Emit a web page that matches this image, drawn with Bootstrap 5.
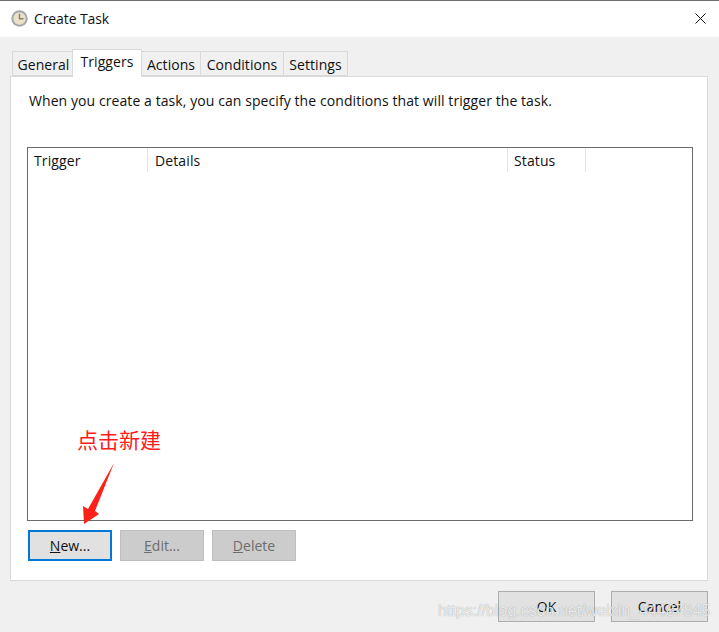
<!DOCTYPE html>
<html lang="en">
<head>
<meta charset="utf-8">
<title>Create Task</title>
<link href="https://cdn.jsdelivr.net/npm/bootstrap@5.3.0/dist/css/bootstrap.min.css" rel="stylesheet">
<style>
html,body{margin:0;height:632px;overflow:hidden}
body{background:#f0f0f0;font-family:"Open Sans","Noto Sans",sans-serif;font-size:14px;color:#111;position:relative}
.dlg-title{height:37px;background:#fff;border-top:1px solid #6e6e6e;padding:0 13px 2px 11px}
.dlg-title-text{font-size:14px;margin-left:6px;letter-spacing:-.1px}
.dlg-body{padding:13px 11px 0 10px}
.dlg-tabs{padding-left:2px;height:27px;border:0;flex-wrap:nowrap;align-items:flex-end;position:relative;z-index:1}
.dlg-tab{height:25px;border:1px solid #d9d9d9;border-left-width:0;background:#f0f0f0;line-height:25px;letter-spacing:.05px;color:#111;white-space:nowrap;margin-bottom:1px;text-align:center}
.dlg-tab:first-child{border-left-width:1px;padding-left:2px}
.dlg-tab.on{height:28px;background:#fff;border-left-width:1px;border-bottom:0;margin:0 0 0 -1px;line-height:24px}
.dlg-panel{height:505px;margin-top:-1px;background:#fff;border:1px solid #d9d9d9;padding:14px 14px 0 16px}
.dlg-intro{margin:0;height:56px;line-height:19px;letter-spacing:.08px;padding-left:2px}
.dlg-list{height:374px;border:1px solid #6a6a6a;background:#fff}
.dlg-col{height:24px;border-right:1px solid #e5e5e5;padding:1px 0 0 6px;line-height:24px;letter-spacing:.12px}
.w1{width:120px}.w2{width:360px;padding-left:7px}.w3{width:78px}
.dlg-btns{margin:9px 0 0 1px;gap:8px}
.dlg-btn{width:84px;height:31px;border:1px solid #adadad;border-radius:0;background:#e1e1e1;color:#111;font-size:14px;padding:0;line-height:27px}
.dlg-btn.focus-blue{border:2px solid #0078d7}
.dlg-btn:disabled{background:#cccccc;border-color:#bfbfbf;color:#6d6d6d;opacity:1}
.dlg-foot{justify-content:flex-end;gap:16px;margin-top:10px}
.dlg-foot .dlg-btn{width:97px}
.note{position:absolute;left:77px;top:426px;color:#ff1a1a;font-family:"Noto Sans CJK SC",sans-serif;font-size:21px;line-height:26px}
.note-arrow{position:absolute;left:78px;top:460px}
.wm{position:absolute;left:438px;top:601px;font-family:"Liberation Sans",sans-serif;font-size:16px;color:rgba(255,255,255,.78);text-shadow:0 0 1px rgba(110,110,110,.7);white-space:nowrap;line-height:20px}
</style>
</head>
<body>
<div class="dlg-title d-flex align-items-center">
  <svg width="17" height="17" viewBox="0 0 17 17">
    <circle cx="8.5" cy="8.5" r="8.2" fill="#a3a7a9"/>
    <circle cx="8.5" cy="8.5" r="6.2" fill="#e9e0c8"/>
    <path d="M8.5 3.8V8.7H12.5" fill="none" stroke="#85806c" stroke-width="1.4"/>
  </svg>
  <span class="dlg-title-text">Create Task</span>
  <svg class="ms-auto" width="11" height="11" viewBox="0 0 11 11"><path d="M.5.5l10 10M10.5.5l-10 10" stroke="#111" stroke-width="1" fill="none"/></svg>
</div>
<div class="dlg-body">
  <div class="nav dlg-tabs">
    <div class="dlg-tab" style="width:61px">General</div>
    <div class="dlg-tab on" style="width:70px">Triggers</div>
    <div class="dlg-tab" style="width:59px">Actions</div>
    <div class="dlg-tab" style="width:83px">Conditions</div>
    <div class="dlg-tab" style="width:64px">Settings</div>
  </div>
  <div class="dlg-panel">
    <p class="dlg-intro">When you create a task, you can specify the conditions that will trigger the task.</p>
    <div class="dlg-list">
      <div class="d-flex">
        <div class="dlg-col w1">Trigger</div>
        <div class="dlg-col w2">Details</div>
        <div class="dlg-col w3">Status</div>
      </div>
    </div>
    <div class="d-flex dlg-btns">
      <button class="btn dlg-btn focus-blue"><u>N</u>ew...</button>
      <button class="btn dlg-btn" disabled><u>E</u>dit...</button>
      <button class="btn dlg-btn" disabled><u>D</u>elete</button>
    </div>
  </div>
  <div class="d-flex dlg-foot">
    <button class="btn dlg-btn">OK</button>
    <button class="btn dlg-btn">Cancel</button>
  </div>
</div>
<div class="note">点击新建</div>
<svg class="note-arrow" width="40" height="66" viewBox="0 0 40 66"><path d="M36 3 L17 51 L21 54 L6 64 L5 46 L10 49 Z" fill="#ff2018"/></svg>
<div class="wm">https://blog.csdn.net/weixin_44487845</div>
</body>
</html>
